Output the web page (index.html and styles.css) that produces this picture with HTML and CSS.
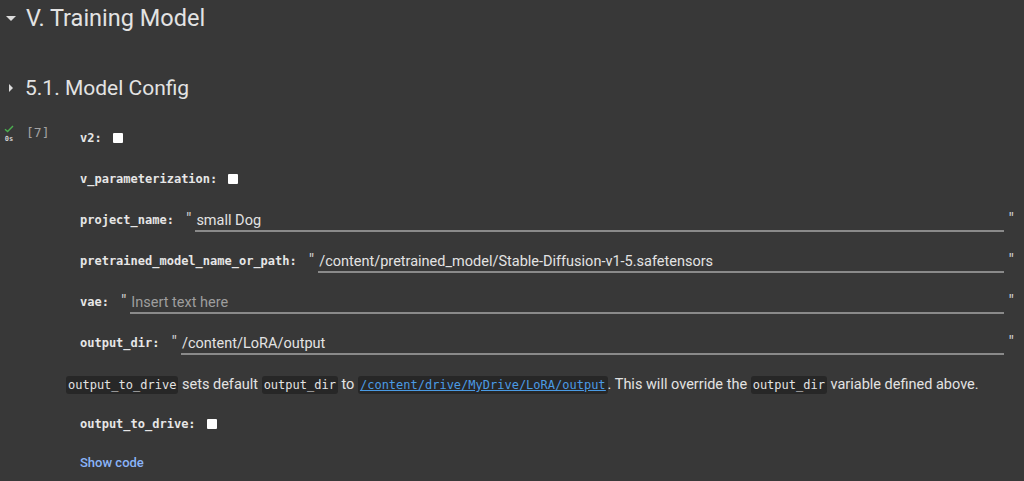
FILE: index.html
```html
<!DOCTYPE html>
<html lang="en">
<head>
    <meta charset="UTF-8">
    <title>V. Training Model</title>
    <link rel="stylesheet" href="styles.css">
</head>
<body>
    <!-- Section headers -->
    <div class="heading h1">
        <span class="caret down"></span>
        <span>V. Training Model</span>
    </div>
    <div class="heading h2">
        <span class="caret right"></span>
        <span>5.1. Model Config</span>
    </div>

    <!-- Form cell -->
    <div class="cell">
        <div class="gutter">
            <div class="status">
                <svg width="10" height="8" viewBox="0 0 10 8"><path d="M1 4.2 L3.6 6.6 L9 1" fill="none" stroke="#4caf50" stroke-width="1.4"/></svg>
                <span class="time">0s</span>
            </div>
            <span class="count">[7]</span>
        </div>
        <div class="cell-body">
            <div class="row"><span class="label">v2:</span><span class="box"></span></div>
            <div class="row"><span class="label">v_parameterization:</span><span class="box"></span></div>
            <div class="row">
                <span class="label">project_name:</span>
                <span class="quote">"</span><span class="field">small Dog</span><span class="quote end">"</span>
            </div>
            <div class="row">
                <span class="label">pretrained_model_name_or_path:</span>
                <span class="quote">"</span><span class="field">/content/pretrained_model/Stable-Diffusion-v1-5.safetensors</span><span class="quote end">"</span>
            </div>
            <div class="row">
                <span class="label">vae:</span>
                <span class="quote">"</span><span class="field empty">Insert text here</span><span class="quote end">"</span>
            </div>
            <div class="row">
                <span class="label">output_dir:</span>
                <span class="quote">"</span><span class="field">/content/LoRA/output</span><span class="quote end">"</span>
            </div>

            <p class="md"><code>output_to_drive</code> sets default <code>output_dir</code> to <a href="#"><code>/content/drive/MyDrive/LoRA/output</code></a>. This will override the <code>output_dir</code> variable defined above.</p>

            <div class="row short"><span class="label">output_to_drive:</span><span class="box"></span></div>
            <div class="row"><a href="#" class="show-code">Show code</a></div>
        </div>
    </div>
</body>
</html>
```

FILE: styles.css
```css
/* Page */
body {
    margin: 0;
    background-color: #383838;
    color: #e3e3e3;
    font-family: Roboto, 'Liberation Sans', sans-serif;
    overflow: hidden;
}

/* Section headings */
.heading {
    display: flex;
    align-items: center;
    gap: 9px;
    padding-left: 6px;
}

.h1 {
    height: 36px;
    font-size: 23.5px;
    gap: 10px;
    margin-bottom: 33px;
}

.h2 {
    height: 38px;
    font-size: 21px;
}

.caret {
    width: 0;
    height: 0;
    border-style: solid;
    border-color: transparent;
}

.caret.down {
    border-width: 5px 5px 0 5px;
    border-top-color: #dcdcdc;
}

.caret.right {
    margin-left: 3px;
    border-width: 4px 0 4px 4px;
    border-left-color: #dcdcdc;
    margin-right: 3px;
}

/* Code cell */
.cell {
    display: flex;
    margin-top: 9px;
}

.gutter {
    width: 66px;
    flex-shrink: 0;
    display: flex;
    align-items: flex-start;
    gap: 11px;
    padding-left: 3px;
    padding-top: 9px;
    box-sizing: border-box;
}

.status {
    display: flex;
    flex-direction: column;
    align-items: center;
    width: 12px;
}

.time {
    font-family: 'DejaVu Sans Mono', monospace;
    font-size: 7px;
    font-weight: bold;
    color: #cfcfcf;
    margin-top: 2px;
}

.count {
    font-family: 'DejaVu Sans Mono', monospace;
    font-size: 13px;
    color: #a3a3a3;
    margin-top: 0;
}

.cell-body {
    flex: 1;
    padding-right: 10px;
}

/* Form rows */
.row {
    display: flex;
    align-items: center;
    height: 41px;
    padding-left: 14px;
}

.row:first-child {
    margin-top: 1px;
}

.row.short {
    height: 36px;
}

.label {
    font-family: 'DejaVu Sans Mono', monospace;
    font-size: 12px;
    font-weight: bold;
    color: #e6e6e6;
    margin-right: 11px;
}

.box {
    width: 10px;
    height: 10px;
    background-color: #ffffff;
    border-radius: 1px;
}

.quote {
    font-size: 17px;
    color: #cfcfcf;
    margin: -3px 4px 0 1px;
}

.quote.end {
    margin: -3px 0 0 5px;
}

.field {
    flex: 1;
    font-size: 14.5px;
    color: #e3e3e3;
    border-bottom: 2px solid #8a8a8a;
    padding: 0 0 1px 1px;
    margin-top: 4px;
}

.field.empty {
    color: #9e9e9e;
}

/* Markdown text */
.md {
    margin: 0;
    height: 43px;
    line-height: 43px;
    font-size: 14.5px;
    color: #e3e3e3;
    white-space: nowrap;
}

code {
    font-family: 'DejaVu Sans Mono', monospace;
    font-size: 12px;
    background-color: #272727;
    border-radius: 3px;
    padding: 2px 2px;
}

.md a {
    color: #4b9be4;
}

.md a code {
    color: #4b9be4;
    text-decoration: underline;
}

.show-code {
    color: #8ab4f8;
    font-size: 13px;
    font-weight: 500;
    text-decoration: none;
}
```
